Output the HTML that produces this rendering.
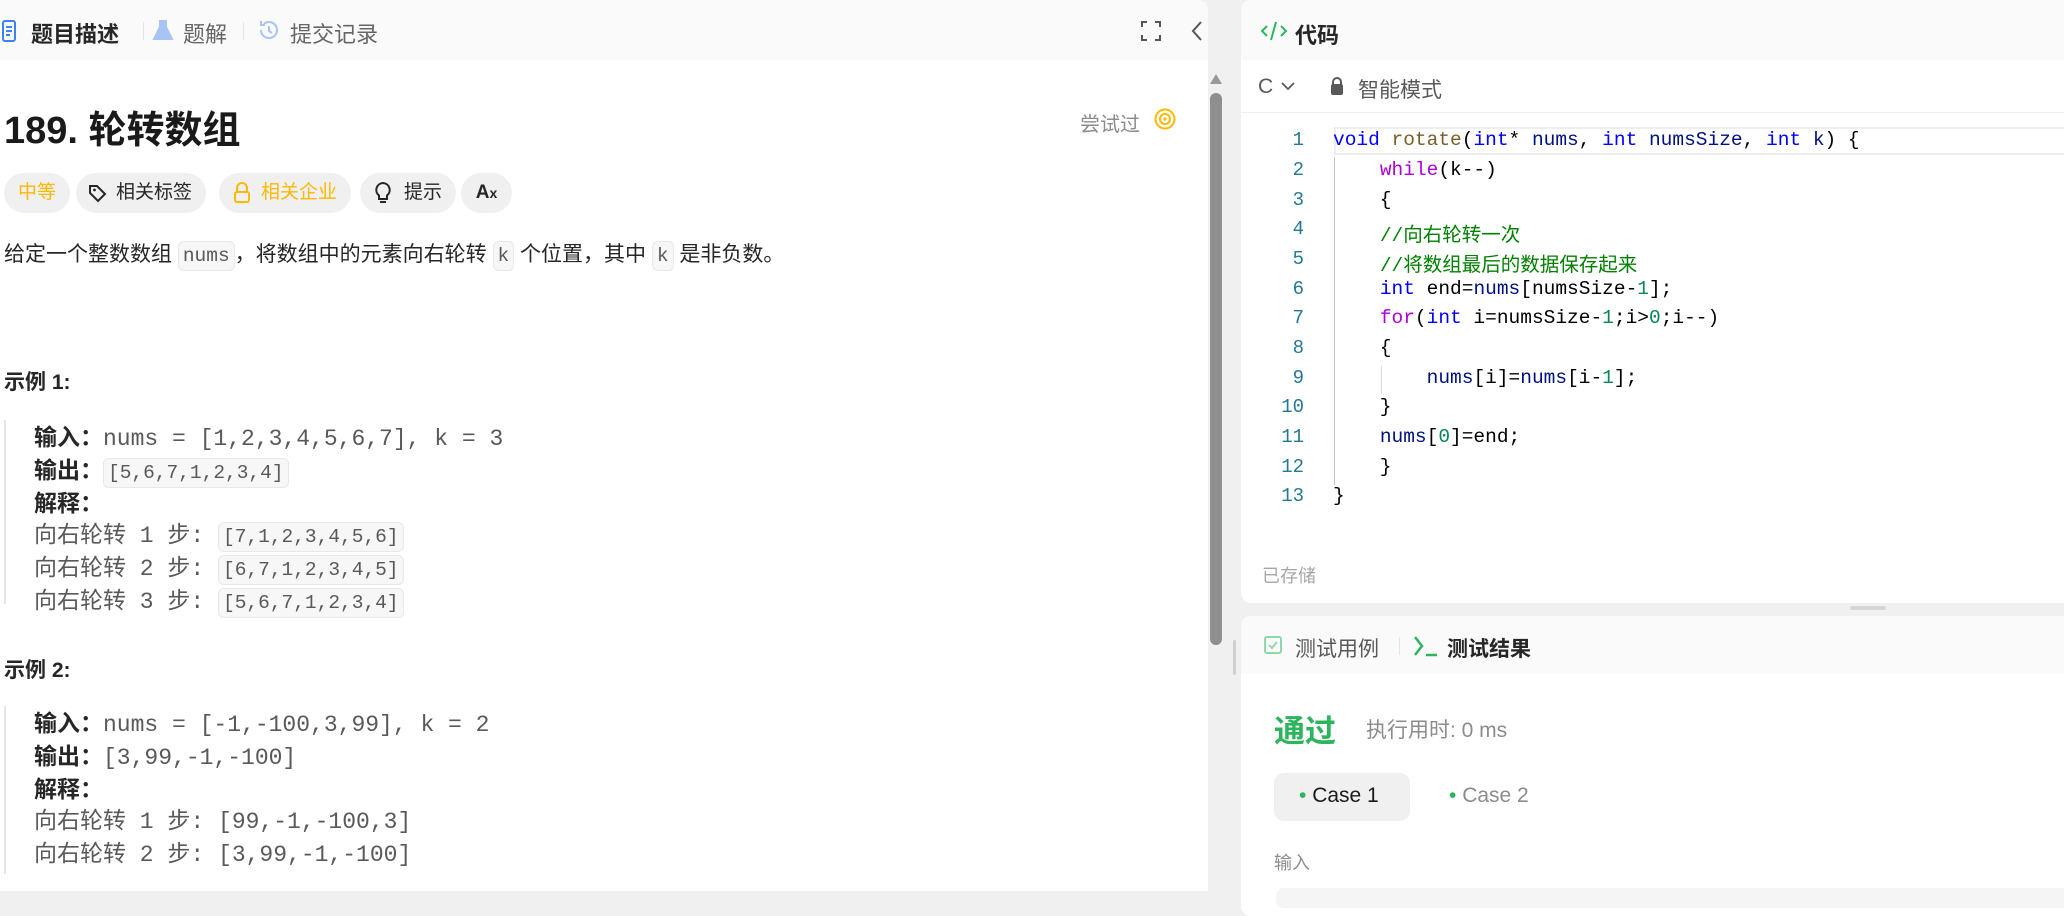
<!DOCTYPE html>
<html><head><meta charset="utf-8"><style>
*{margin:0;padding:0;box-sizing:border-box}
body{width:2064px;height:891px;overflow:hidden;background:#f0f0f0;font-family:"Liberation Sans","Noto Sans CJK SC",sans-serif;color:#262626;position:relative}
.a{position:absolute;white-space:nowrap}
.mono{font-family:"Liberation Mono","Noto Sans CJK SC",monospace}
.panel{position:absolute;background:#fff;border-radius:10px;overflow:hidden}
.pill{position:absolute;top:173px;height:40px;border-radius:20px;background:#f0f0f0;font-size:19px;line-height:40px;padding:0 14px;color:#262626}
.code{display:inline-block;background:#f7f7f8;border:1px solid #e8e8e8;border-radius:6px;padding:0 4px;line-height:28px;font-size:19.5px;color:#595959}
.ln{position:absolute;left:1260px;width:44px;text-align:right;font-size:19px;color:#237893}
.cl{position:absolute;left:1333px;font-size:19.5px;color:#000;white-space:pre}
.kw{color:#0000ff}.ct{color:#af00db}.cm{color:#008000}.fn{color:#795e26}.nu{color:#098658}.v{color:#001080}
.ex{position:absolute;left:34px;font-size:23px;line-height:33px;color:#595959;white-space:pre}
.ex b{color:#262626;font-family:"Liberation Sans","Noto Sans CJK SC",sans-serif}
</style></head><body>

<div class="panel" style="left:0;top:0;width:1208px;height:891px;border-radius:0 10px 0 0">
<div class="a" style="left:0;top:0;width:1208px;height:60px;background:#fafafa"></div>
</div>
<svg class="a" style="left:2px;top:20px" width="14" height="22" viewBox="0 0 14 22"><rect x="1" y="1" width="12" height="20" rx="2" fill="none" stroke="#3b82f6" stroke-width="2"/><path d="M4 7h6M4 11h6M4 15h4" stroke="#3b82f6" stroke-width="2"/></svg>
<div class="a" style="left:31px;top:17px;font-size:22px;font-weight:bold">题目描述</div>
<div class="a" style="left:143px;top:22px;width:1px;height:18px;background:#e5e5e5"></div>
<svg class="a" style="left:152px;top:18px" width="22" height="24" viewBox="0 0 22 24"><path d="M8 2v7L2 21h18L14 9V2" fill="#a8c4f5" stroke="#a8c4f5" stroke-width="2"/></svg>
<div class="a" style="left:183px;top:17px;font-size:22px;color:#666">题解</div>
<div class="a" style="left:243px;top:22px;width:1px;height:18px;background:#e5e5e5"></div>
<svg class="a" style="left:257px;top:18px" width="24" height="24" viewBox="0 0 24 24"><path d="M4 12a8 8 0 1 0 3-6.2M4 3v4h4M12 8v5l3 2" fill="none" stroke="#a8c4f5" stroke-width="2"/></svg>
<div class="a" style="left:290px;top:17px;font-size:22px;color:#666">提交记录</div>
<svg class="a" style="left:1140px;top:20px" width="22" height="22" viewBox="0 0 22 22"><path d="M2 7V2h5M15 2h5v5M20 15v5h-5M7 20H2v-5" fill="none" stroke="#555" stroke-width="2"/></svg>
<svg class="a" style="left:1190px;top:20px" width="14" height="22" viewBox="0 0 14 22"><path d="M11 2L3 11l8 9" fill="none" stroke="#555" stroke-width="2"/></svg>

<div class="a" style="left:4px;top:99px;font-size:38px;font-weight:bold;color:#1a1a1a">189. 轮转数组</div>
<div class="a" style="left:1080px;top:108px;font-size:20px;color:#8c8c8c">尝试过</div>
<svg class="a" style="left:1153px;top:107px" width="24" height="24" viewBox="0 0 24 24"><circle cx="12" cy="12" r="9.5" fill="none" stroke="#ffb800" stroke-width="2"/><circle cx="12" cy="12" r="5" fill="none" stroke="#ffb800" stroke-width="2"/><circle cx="12" cy="12" r="1.6" fill="#ffb800"/></svg>

<div class="pill" style="left:4px;color:#ffb800">中等</div>
<div class="pill" style="left:76px;padding-left:40px">相关标签</div>
<svg class="a" style="left:88px;top:183px" width="20" height="20" viewBox="0 0 20 20"><path d="M2 3v7l8 8 7-7-8-8H3z" fill="none" stroke="#262626" stroke-width="2"/><circle cx="6.5" cy="7" r="1.4" fill="#262626"/></svg>
<div class="pill" style="left:219px;padding-left:42px;color:#ffb800">相关企业</div>
<svg class="a" style="left:233px;top:182px" width="18" height="22" viewBox="0 0 18 22"><path d="M4 10V6a5 5 0 0 1 10 0v4" fill="none" stroke="#ffb800" stroke-width="2"/><rect x="2" y="10" width="14" height="10" rx="2" fill="none" stroke="#ffb800" stroke-width="2"/></svg>
<div class="pill" style="left:360px;padding-left:44px">提示</div>
<svg class="a" style="left:374px;top:181px" width="18" height="24" viewBox="0 0 18 24"><path d="M9 2a7 7 0 0 0-4 12.5V18h8v-3.5A7 7 0 0 0 9 2zM6 21h6" fill="none" stroke="#262626" stroke-width="2"/></svg>
<div class="pill" style="left:461px;width:51px;padding:0;text-align:center;font-weight:bold">A<span style="font-size:14px">x</span></div>

<div class="a" style="left:4px;top:241px;font-size:21px;line-height:28px">给定一个整数数组 <span class="code mono">nums</span>，将数组中的元素向右轮转 <span class="code mono">k</span> 个位置，其中 <span class="code mono">k</span> 是非负数。</div>

<div class="a" style="left:4px;top:366px;font-size:21px;font-weight:bold">示例 1:</div>
<div class="a" style="left:4px;top:420px;width:2px;height:184px;background:#e5e5e5"></div>
<div class="ex mono" style="top:421px"><b>输入：</b>nums = [1,2,3,4,5,6,7], k = 3</div>
<div class="ex mono" style="top:454px"><b>输出：</b><span class="code">[5,6,7,1,2,3,4]</span></div>
<div class="ex mono" style="top:487px"><b>解释：</b></div>
<div class="ex mono" style="top:520px">向右轮转 1 步: <span class="code">[7,1,2,3,4,5,6]</span></div>
<div class="ex mono" style="top:553px">向右轮转 2 步: <span class="code">[6,7,1,2,3,4,5]</span></div>
<div class="ex mono" style="top:586px">向右轮转 3 步: <span class="code">[5,6,7,1,2,3,4]</span></div>

<div class="a" style="left:4px;top:654px;font-size:21px;font-weight:bold">示例 2:</div>
<div class="a" style="left:4px;top:706px;width:2px;height:168px;background:#e5e5e5"></div>
<div class="ex mono" style="top:707px"><b>输入：</b>nums = [-1,-100,3,99], k = 2</div>
<div class="ex mono" style="top:740px"><b>输出：</b>[3,99,-1,-100]</div>
<div class="ex mono" style="top:773px"><b>解释：</b></div>
<div class="ex mono" style="top:806px">向右轮转 1 步: [99,-1,-100,3]</div>
<div class="ex mono" style="top:839px">向右轮转 2 步: [3,99,-1,-100]</div>

<div class="a" style="left:1210px;top:74px;width:0;height:0;border-left:6px solid transparent;border-right:6px solid transparent;border-bottom:10px solid #999"></div>
<div class="a" style="left:1210px;top:93px;width:12px;height:552px;background:#8f8f8f;border-radius:6px"></div>
<div class="a" style="left:1233px;top:640px;width:3px;height:35px;background:#d0d0d0;border-radius:2px"></div>

<div class="panel" style="left:1241px;top:0;width:840px;height:603px">
<div class="a" style="left:0;top:0;width:840px;height:60px;background:#fafafa"></div>
<div class="a" style="left:0;top:112px;width:840px;height:1px;background:#eee"></div>
</div>
<svg class="a" style="left:1261px;top:21px" width="26" height="20" viewBox="0 0 26 20"><path d="M6 5L1 10l5 5M20 5l5 5-5 5M15 1l-5 18" fill="none" stroke="#2db55d" stroke-width="2"/></svg>
<div class="a" style="left:1295px;top:18px;font-size:22px;font-weight:bold">代码</div>
<div class="a" style="left:1258px;top:75px;font-size:21px;color:#595959">C</div>
<svg class="a" style="left:1280px;top:80px" width="16" height="12" viewBox="0 0 16 12"><path d="M2 3l6 6 6-6" fill="none" stroke="#595959" stroke-width="1.8"/></svg>
<svg class="a" style="left:1330px;top:76px" width="14" height="20" viewBox="0 0 14 20"><path d="M3 9V6a4 4 0 0 1 8 0v3" fill="none" stroke="#595959" stroke-width="2"/><rect x="1" y="8" width="12" height="11" rx="2" fill="#595959"/></svg>
<div class="a" style="left:1358px;top:74px;font-size:21px;color:#595959">智能模式</div>

<div class="a" style="left:1334px;top:127px;width:730px;height:28px;border:2px solid #eee;border-right:none"></div>
<div class="a" style="left:1334px;top:157px;width:1px;height:328px;background:#c8c8c8"></div>
<div class="a" style="left:1381px;top:366px;width:1px;height:28px;background:#ddd"></div>
<div class="ln mono" style="top:129px">1</div><div class="ln mono" style="top:159px">2</div><div class="ln mono" style="top:189px">3</div><div class="ln mono" style="top:218px">4</div><div class="ln mono" style="top:248px">5</div><div class="ln mono" style="top:278px">6</div><div class="ln mono" style="top:307px">7</div><div class="ln mono" style="top:337px">8</div><div class="ln mono" style="top:367px">9</div><div class="ln mono" style="top:396px">10</div><div class="ln mono" style="top:426px">11</div><div class="ln mono" style="top:456px">12</div><div class="ln mono" style="top:485px">13</div>
<div class="cl mono" style="top:129px"><span class="kw">void</span> <span class="fn">rotate</span>(<span class="kw">int</span>* <span class="v">nums</span>, <span class="kw">int</span> <span class="v">numsSize</span>, <span class="kw">int</span> <span class="v">k</span>) {</div>
<div class="cl mono" style="top:159px">    <span class="ct">while</span>(k--)</div>
<div class="cl mono" style="top:189px">    {</div>
<div class="cl mono" style="top:218px">    <span class="cm">//向右轮转一次</span></div>
<div class="cl mono" style="top:248px">    <span class="cm">//将数组最后的数据保存起来</span></div>
<div class="cl mono" style="top:278px">    <span class="kw">int</span> end=<span class="v">nums</span>[numsSize-<span class="nu">1</span>];</div>
<div class="cl mono" style="top:307px">    <span class="ct">for</span>(<span class="kw">int</span> i=numsSize-<span class="nu">1</span>;i&gt;<span class="nu">0</span>;i--)</div>
<div class="cl mono" style="top:337px">    {</div>
<div class="cl mono" style="top:367px">        <span class="v">nums</span>[i]=<span class="v">nums</span>[i-<span class="nu">1</span>];</div>
<div class="cl mono" style="top:396px">    }</div>
<div class="cl mono" style="top:426px">    <span class="v">nums</span>[<span class="nu">0</span>]=end;</div>
<div class="cl mono" style="top:456px">    }</div>
<div class="cl mono" style="top:485px">}</div>
<div class="a" style="left:1262px;top:562px;font-size:18px;color:#a6a6a6">已存储</div>
<div class="a" style="left:1850px;top:606px;width:36px;height:4px;border-radius:2px;background:#d6d6d6"></div>

<div class="panel" style="left:1241px;top:616px;width:840px;height:300px">
<div class="a" style="left:0;top:0;width:840px;height:58px;background:#fafafa"></div>
</div>
<svg class="a" style="left:1264px;top:635px" width="18" height="20" viewBox="0 0 18 20"><rect x="1" y="2" width="16" height="16" rx="2" fill="none" stroke="#8fd8a8" stroke-width="2"/><path d="M5 10l3 3 5-6" fill="none" stroke="#8fd8a8" stroke-width="1.8"/></svg>
<div class="a" style="left:1295px;top:633px;font-size:21px;color:#595959">测试用例</div>
<div class="a" style="left:1399px;top:637px;width:1px;height:18px;background:#e5e5e5"></div>
<svg class="a" style="left:1413px;top:635px" width="26" height="22" viewBox="0 0 26 22"><path d="M2 2l7 9-7 9M13 20h11" fill="none" stroke="#2db55d" stroke-width="2.5"/></svg>
<div class="a" style="left:1447px;top:633px;font-size:21px;font-weight:bold">测试结果</div>
<div class="a" style="left:1274px;top:706px;font-size:31px;font-weight:bold;color:#2db55d">通过</div>
<div class="a" style="left:1366px;top:714px;font-size:21px;color:#8c8c8c">执行用时: 0 ms</div>
<div class="a" style="left:1274px;top:773px;width:136px;height:48px;border-radius:10px;background:#f0f0f0"></div>
<div class="a" style="left:1299px;top:784px;font-size:21px;color:#1a1a1a"><span style="color:#2db55d">•</span> Case 1</div>
<div class="a" style="left:1449px;top:784px;font-size:21px;color:#8c8c8c"><span style="color:#2db55d">•</span> Case 2</div>
<div class="a" style="left:1274px;top:849px;font-size:18px;color:#8c8c8c">输入</div>
<div class="a" style="left:1276px;top:888px;width:800px;height:20px;border-radius:8px;background:#f5f5f5"></div>
</body></html>
